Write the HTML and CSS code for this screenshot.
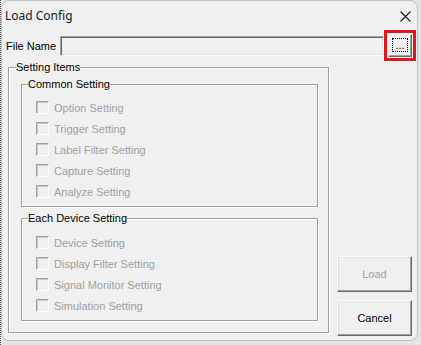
FILE: index.html
```html
<!DOCTYPE html>
<html>
<head>
<meta charset="utf-8">
<link rel="stylesheet" href="styles.css">
</head>
<body>
<div class="window">
  <div class="titlebar">
    <span class="title">Load Config</span>
    <svg class="close" width="11" height="11" viewBox="0 0 11 11"><path d="M0.5 0.5 L10.5 10.5 M10.5 0.5 L0.5 10.5" stroke="#1a1a1a" stroke-width="1.1" fill="none"/></svg>
  </div>
  <div class="filerow">
    <span class="label">File Name</span>
    <div class="textbox"></div>
    <div class="highlight">
      <div class="browse"><span class="focus">...</span></div>
    </div>
  </div>
  <div class="main">
    <fieldset class="group outer">
      <legend>Setting Items</legend>
      <fieldset class="group inner first">
        <legend>Common Setting</legend>
        <div class="row"><span class="cb"></span><span class="dis">Option Setting</span></div>
        <div class="row"><span class="cb"></span><span class="dis">Trigger Setting</span></div>
        <div class="row"><span class="cb"></span><span class="dis">Label Filter Setting</span></div>
        <div class="row"><span class="cb"></span><span class="dis">Capture Setting</span></div>
        <div class="row"><span class="cb"></span><span class="dis">Analyze Setting</span></div>
      </fieldset>
      <fieldset class="group inner second">
        <legend>Each Device Setting</legend>
        <div class="row"><span class="cb"></span><span class="dis">Device Setting</span></div>
        <div class="row"><span class="cb"></span><span class="dis">Display Filter Setting</span></div>
        <div class="row"><span class="cb"></span><span class="dis">Signal Monitor Setting</span></div>
        <div class="row"><span class="cb"></span><span class="dis">Simulation Setting</span></div>
      </fieldset>
    </fieldset>
    <div class="buttons">
      <div class="btn disabled">Load</div>
      <div class="btn">Cancel</div>
    </div>
  </div>
</div>
</body>
</html>
```
FILE: styles.css
```css
html, body {
  margin: 0;
  padding: 0;
}
body {
  width: 421px;
  height: 345px;
  background: #e4e4e4;
  font-family: "Liberation Sans", Arial, sans-serif;
  font-size: 11px;
  color: #000;
  overflow: hidden;
  border-left: 1px dotted #555;
  box-sizing: border-box;
}
.window {
  width: 417px;
  height: 341px;
  box-sizing: border-box;
  border: 1px solid #c2c2c2;
  border-radius: 8px;
  background: #f0f0f0;
  display: flex;
  flex-direction: column;
}
.titlebar {
  height: 29px;
  display: flex;
  align-items: center;
  justify-content: space-between;
  padding: 0 6px 0 3px;
}
.title {
  font-family: "Noto Sans", "Open Sans", sans-serif;
  font-size: 12px;
  color: #1a1a1a;
}
.close {
  display: block;
  margin-top: 1px;
}
.filerow {
  height: 31px;
  display: flex;
  align-items: center;
  padding-left: 4px;
}
.label {
  flex: 0 0 54px;
}
.textbox {
  width: 324px;
  height: 20px;
  box-sizing: border-box;
  border: 1px solid;
  border-color: #a0a0a0 #ffffff #ffffff #a0a0a0;
  box-shadow: inset 1px 1px 0 #696969, inset -1px -1px 0 #e3e3e3;
  background: #f0f0f0;
}
.highlight {
  border: 3px solid #e2141c;
  padding: 1px;
  background: #f0f0f0;
}
.browse {
  width: 24px;
  height: 23px;
  box-sizing: border-box;
  border: 1px solid;
  border-color: #ffffff #696969 #696969 #ffffff;
  box-shadow: inset -1px -1px 0 #a0a0a0;
  padding: 3px 3px 4px 3px;
  display: flex;
}
.focus {
  flex: 1;
  border: 1px dotted #000;
  display: flex;
  align-items: flex-end;
  justify-content: center;
  line-height: 11px;
  font-size: 11px;
}
.main {
  display: flex;
  align-items: flex-end;
}
.group {
  margin: 0;
  border: 1px solid #a0a0a0;
  box-shadow: 1px 1px 0 #fff, inset 1px 1px 0 #fff;
}
.group legend {
  padding: 0;
  line-height: 13px;
  height: 13px;
}
.outer {
  margin-left: 6px;
  margin-bottom: 3px;
  width: 321px;
  box-sizing: border-box;
  padding: 4px 10px 11px 0;
}
.outer > legend {
  margin-left: 7px;
}
.inner {
  box-sizing: border-box;
  width: 297px;
  margin-left: 12px;
  padding: 6px 0 4px 0;
}
.inner > legend {
  margin-left: 6px;
}
.second {
  margin-top: 5px;
  padding-top: 7px;
}
.row {
  height: 21px;
  display: flex;
  align-items: center;
  margin-left: 14px;
}
.cb {
  width: 13px;
  height: 13px;
  box-sizing: border-box;
  border: 1px solid;
  border-color: #a0a0a0 #ffffff #ffffff #a0a0a0;
  box-shadow: inset 1px 1px 0 #c8c8c8;
  margin-right: 5px;
  background: #f0f0f0;
}
.dis {
  color: #a0a0a0;
}
.buttons {
  margin-left: 8px;
  display: flex;
  flex-direction: column;
  gap: 8px;
}
.btn {
  width: 75px;
  height: 36px;
  box-sizing: border-box;
  border: 1px solid;
  border-color: #ffffff #696969 #696969 #ffffff;
  box-shadow: inset -1px -1px 0 #a0a0a0, inset 1px 1px 0 #e3e3e3;
  display: flex;
  align-items: center;
  justify-content: center;
  background: #f0f0f0;
}
.btn.disabled {
  color: #a0a0a0;
}
```
